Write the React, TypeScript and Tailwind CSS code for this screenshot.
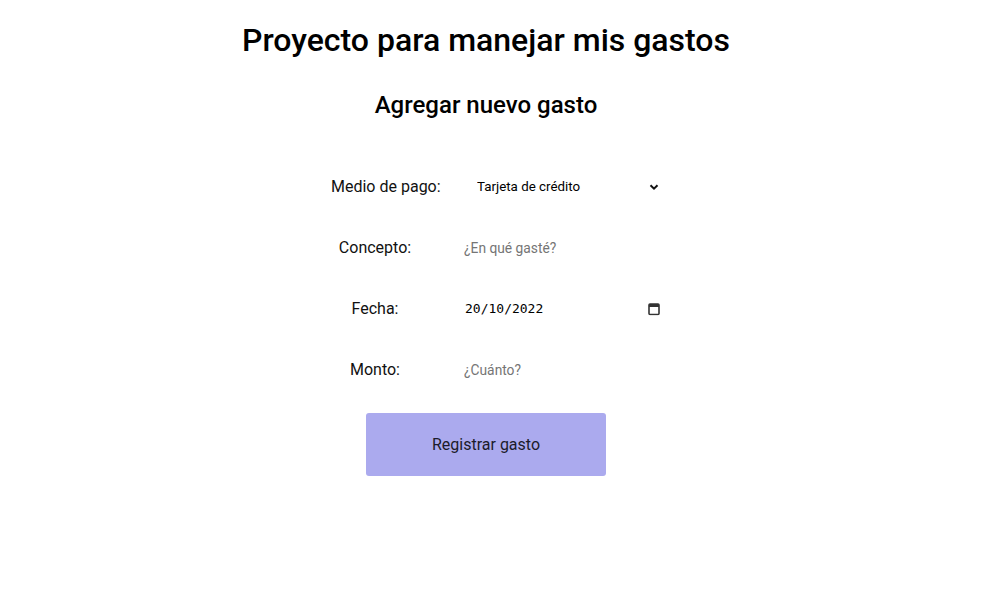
import { useState } from "react";

function Chevron() {
  return (
    <svg width="10" height="10" viewBox="0 0 10 10" className="pointer-events-none absolute right-[4px] top-1/2 -translate-y-1/2">
      <path d="M1.5 3.2 L5 6.7 L8.5 3.2" fill="none" stroke="#111" strokeWidth="2" />
    </svg>
  );
}

function CalendarIcon() {
  return (
    <svg width="12" height="13" viewBox="0 0 12 13" className="pointer-events-none absolute right-[3px] top-1/2 -translate-y-1/2">
      <rect x="1" y="1.5" width="10" height="10.5" rx="1" fill="none" stroke="#333" strokeWidth="1.6" />
      <rect x="1" y="1.5" width="10" height="3" fill="#333" />
    </svg>
  );
}

export default function App() {
  const [medio, setMedio] = useState("credito");
  const [concepto, setConcepto] = useState("");
  const [fecha, setFecha] = useState("20/10/2022");
  const [monto, setMonto] = useState("");

  const label = "w-[128px] shrink-0 whitespace-nowrap text-center text-[16px] text-[#111]";
  const field = "relative ml-[20px] w-[206px]";

  return (
    <main
      className="min-h-screen w-[972px] bg-white text-black"
      style={{ fontFamily: "Roboto, 'Liberation Sans', sans-serif" }}
    >
      <h1 className="pt-[21px] text-center text-[32px] leading-[38px] font-medium">
        Proyecto para manejar mis gastos
      </h1>
      <h2 className="mt-[32px] text-center text-[24px] leading-[28px] font-medium">
        Agregar nuevo gasto
      </h2>

      <form
        className="mt-[50px] flex flex-col items-center gap-[25px]"
        onSubmit={(e) => e.preventDefault()}
      >
        <div className="flex h-[36px] w-[354px] items-center pl-[2px]">
          <label className={`${label} pl-[20px]`}>Medio de pago:</label>
          <div className={field}>
            <select
              value={medio}
              onChange={(e) => setMedio(e.target.value)}
              className="w-full appearance-none bg-transparent py-1 pl-[18px] text-[13.333px] text-black outline-none"
            >
              <option value="credito">Tarjeta de crédito</option>
              <option value="debito">Tarjeta de débito</option>
              <option value="efectivo">Efectivo</option>
            </select>
            <Chevron />
          </div>
        </div>

        <div className="flex h-[36px] w-[354px] items-center pl-[2px]">
          <label className={label}>Concepto:</label>
          <div className={field}>
            <input
              value={concepto}
              onChange={(e) => setConcepto(e.target.value)}
              placeholder="¿En qué gasté?"
              className="w-full bg-transparent py-1 pl-[5px] text-[13.8px] outline-none placeholder:text-[#757575]"
            />
          </div>
        </div>

        <div className="flex h-[36px] w-[354px] items-center pl-[2px]">
          <label className={label}>Fecha:</label>
          <div className={field}>
            <input
              value={fecha}
              onChange={(e) => setFecha(e.target.value)}
              className="w-full bg-transparent py-1 pl-[6px] text-[13px] outline-none"
              style={{ fontFamily: "'DejaVu Sans Mono', 'Liberation Mono', monospace" }}
            />
            <CalendarIcon />
          </div>
        </div>

        <div className="flex h-[36px] w-[354px] items-center pl-[2px]">
          <label className={label}>Monto:</label>
          <div className={field}>
            <input
              value={monto}
              onChange={(e) => setMonto(e.target.value)}
              placeholder="¿Cuánto?"
              className="w-full bg-transparent py-1 pl-[5px] text-[13.8px] outline-none placeholder:text-[#757575]"
            />
          </div>
        </div>

        <button
          type="submit"
          className="h-[63px] w-[240px] rounded-[3px] bg-[#abaaee] text-[16px] text-[#1c1c2a]"
        >
          Registrar gasto
        </button>
      </form>
    </main>
  );
}
